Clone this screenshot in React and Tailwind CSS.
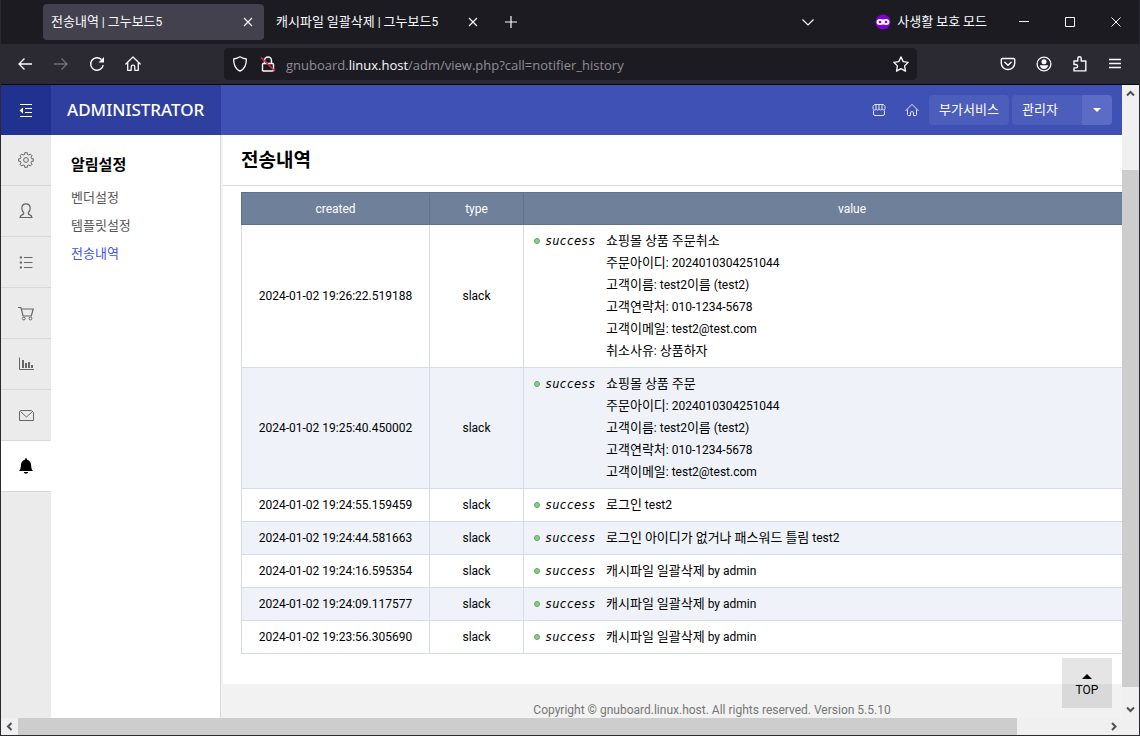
import React from "react";

const HANGUL = /([\uac00-\ud7a3]+)/;

/* Hangul glyphs run small beside the Latin face, so they are set one step larger. */
function Mixed({ children }) {
  return children.split(HANGUL).map((part, i) =>
    HANGUL.test(part) ? (
      <span key={i} className="text-[13px]">
        {part}
      </span>
    ) : (
      part
    )
  );
}

/* Outline of an eight-toothed gear centred in a 16 unit box. */
const GEAR_PATH =
  Array.from({ length: 8 }, (_, tooth) =>
    [
      [-14, 5.7],
      [-10, 7.4],
      [10, 7.4],
      [14, 5.7],
    ].map(([offset, radius]) => {
      const angle = ((tooth * 45 + offset) * Math.PI) / 180;
      return `${(8 + radius * Math.cos(angle)).toFixed(2)} ${(8 + radius * Math.sin(angle)).toFixed(2)}`;
    })
  )
    .flat()
    .map((point, i) => (i === 0 ? "M" : "L") + point)
    .join("") + "Z";

function Icon({ size = 16, label, children, className = "", ...rest }) {
  return (
    <svg
      width={size}
      height={size}
      viewBox={`0 0 ${size} ${size}`}
      fill="none"
      stroke="currentColor"
      strokeWidth="1"
      className={`shrink-0 ${className}`}
      aria-hidden="true"
      {...rest}
    >
      {children}
    </svg>
  );
}

const CloseIcon = () => (
  <Icon size={10}>
    <path d="M1 1l8 8M9 1l-8 8" strokeWidth="1.1" />
  </Icon>
);

function TabBar() {
  return (
    <div className="flex h-11 items-center bg-[#1c1b22] pr-[18px] pl-[42px] text-[12px] text-[#fbfbfe]">
      <div className="flex h-9 w-[221px] items-center justify-between rounded bg-[#42414d] pr-[11px] pl-2">
        <span className="whitespace-nowrap">
          <Mixed>전송내역 | 그누보드5</Mixed>
        </span>
        <button type="button" aria-label="탭 닫기">
          <CloseIcon />
        </button>
      </div>
      <div className="flex h-9 w-[225px] items-center justify-between rounded pr-[11px] pl-3">
        <span className="whitespace-nowrap">
          <Mixed>캐시파일 일괄삭제 | 그누보드5</Mixed>
        </span>
        <button type="button" aria-label="탭 닫기">
          <CloseIcon />
        </button>
      </div>
      <button type="button" aria-label="새 탭" className="ml-4">
        <Icon size={12}>
          <path d="M6 0v12M0 6h12" strokeWidth="1.2" />
        </Icon>
      </button>
      <div className="flex-1" />
      <button type="button" aria-label="탭 목록" className="mr-[60px]">
        <Icon size={14}>
          <path d="M1.500 4.500L7 10l5.500-5.500" strokeWidth="1.2" />
        </Icon>
      </button>
      <div className="flex items-center gap-[6px] whitespace-nowrap">
        <Icon size={16}>
          <circle cx="8" cy="8" r="7.500" fill="#8000d7" stroke="none" />
          <path
            d="M4.700 4.900C2.700 4.900 1.500 6.200 1.500 8s1.200 3.100 3.200 3.100c1.400 0 2.300-.7 3.300-.7s1.900.7 3.300.7c2 0 3.200-1.300 3.200-3.100s-1.200-3.100-3.200-3.100c-1.400 0-2.300.7-3.300.7s-1.900-.7-3.300-.7z"
            fill="#fff"
            stroke="none"
          />
          <circle cx="5" cy="8" r="1.300" fill="#8000d7" stroke="none" />
          <circle cx="11" cy="8" r="1.300" fill="#8000d7" stroke="none" />
        </Icon>
        <span>
          <Mixed>사생활 보호 모드</Mixed>
        </span>
      </div>
      <button type="button" aria-label="최소화" className="ml-8">
        <Icon size={10}>
          <path d="M0 4.500h10" />
        </Icon>
      </button>
      <button type="button" aria-label="최대화" className="ml-9">
        <Icon size={10}>
          <path d="M.5.5h9v9h-9z" />
        </Icon>
      </button>
      <button type="button" aria-label="창 닫기" className="ml-9">
        <Icon size={10}>
          <path d="M.5.5l9 9M9.500.5l-9 9" />
        </Icon>
      </button>
    </div>
  );
}

function Toolbar() {
  return (
    <div className="flex h-[41px] items-center border-b border-[#0c0c0d] bg-[#2b2a33] pr-[17px] pl-4 text-[#fbfbfe]">
      <div className="flex w-[207px] items-center gap-5">
        <button type="button" aria-label="뒤로">
          <Icon>
            <path d="M15 8H2M7.500 2.500L2 8l5.500 5.500" strokeWidth="1.300" />
          </Icon>
        </button>
        <button type="button" aria-label="앞으로" className="text-[#717078]">
          <Icon>
            <path d="M1 8h13M8.500 2.500L14 8l-5.500 5.500" strokeWidth="1.300" />
          </Icon>
        </button>
        <button type="button" aria-label="새로고침">
          <Icon>
            <path d="M14.200 9A6.300 6.300 0 1 1 12.500 3.600" strokeWidth="1.400" />
            <path d="M15 1v5.500H9.500z" fill="currentColor" stroke="none" />
          </Icon>
        </button>
        <button type="button" aria-label="홈">
          <Icon>
            <path
              d="M.8 8L8 1l7.200 7M2.700 6.500V14.300h3.500V11a1.800 1.800 0 0 1 3.600 0v3.300h3.500V6.500"
              strokeWidth="1.300"
              strokeLinejoin="round"
              strokeLinecap="round"
            />
          </Icon>
        </button>
      </div>
      <div className="flex h-8 flex-1 items-center rounded bg-[#1c1b22] px-2">
        <Icon>
          <path
            d="M8 .8c2 1.300 4 1.900 6.300 2.200C14.500 9 12.500 13 8 15.200 3.500 13 1.500 9 1.700 3 4 2.700 6 2.100 8 .8z"
            strokeWidth="1.300"
            strokeLinejoin="round"
          />
        </Icon>
        <Icon className="mr-[10px] ml-3">
          <rect x="2.500" y="7.500" width="11" height="7.500" rx="1" strokeWidth="1.400" />
          <path d="M4.500 7.500V4.500a3.500 3.500 0 0 1 7 0v3" strokeWidth="1.400" />
          <path d="M1 1.500l14 13.500" stroke="#e22850" strokeWidth="1.600" />
        </Icon>
        <div className="flex-1 pt-[3px] font-['Open_Sans','Noto_Sans',sans-serif] text-[13px] whitespace-nowrap text-[#8f8e96]">
          gnuboard.<span className="text-[#fbfbfe]">linux.host</span>
          /adm/view.php?call=notifier_history
        </div>
        <button type="button" aria-label="북마크">
          <Icon>
            <path
              d="M8 .9l2.200 4.700 5 .7-3.600 3.600.9 5.200L8 12.600l-4.500 2.500.9-5.200L.8 6.300l5-.7z"
              strokeWidth="1.300"
              strokeLinejoin="round"
            />
          </Icon>
        </button>
      </div>
      <div className="ml-[83px] flex items-center gap-5">
        <button type="button" aria-label="Pocket">
          <Icon>
            <path
              d="M2.500 2.500h11a1.200 1.200 0 0 1 1.200 1.200v3.500a6.700 6.300 0 0 1-13.400 0V3.700a1.200 1.200 0 0 1 1.200-1.200z"
              strokeWidth="1.400"
            />
            <path d="M4.800 6.300L8 9.300l3.200-3" strokeWidth="1.400" strokeLinecap="round" />
          </Icon>
        </button>
        <button type="button" aria-label="계정">
          <Icon>
            <circle cx="8" cy="8" r="6.900" strokeWidth="1.300" />
            <circle cx="8" cy="5.800" r="2.500" fill="currentColor" stroke="none" />
            <path d="M3.800 9.200h8.400c-.4 2.400-2 3.800-4.200 3.800s-3.800-1.400-4.200-3.800z" fill="currentColor" stroke="none" />
          </Icon>
        </button>
        <button type="button" aria-label="확장 기능">
          <Icon>
            <path
              d="M2 5h3.800V2.500a1.700 1.700 0 0 1 3.400 0V5h4.600v9.900H2v-3h1.900a1.700 1.700 0 0 0 0-3.400H2z"
              strokeWidth="1.400"
              strokeLinejoin="round"
            />
          </Icon>
        </button>
        <button type="button" aria-label="메뉴">
          <Icon size={14}>
            <path d="M1 2.500h12M1 6.500h12M1 10.500h12" strokeWidth="1.300" />
          </Icon>
        </button>
      </div>
    </div>
  );
}

const RAIL = [
  {
    label: "환경설정",
    icon: (
      <Icon size={16}>
        <path d={GEAR_PATH} strokeLinejoin="round" />
        <circle cx="8" cy="8" r="2.400" />
      </Icon>
    ),
  },
  {
    label: "회원관리",
    icon: (
      <Icon size={16}>
        <path d="M5.500 9.500C4.300 8.300 3.800 6.900 3.800 5c0-2.500 1.700-4.200 4.200-4.200S12.200 2.500 12.200 5c0 1.900-.5 3.300-1.700 4.500-.5.600-.3 1.500.6 1.900 1.900.8 2.700 1.400 2.900 3.100H2c.2-1.700 1-2.300 2.900-3.100.9-.4 1.100-1.300.6-1.900z" strokeWidth="1.200" />
      </Icon>
    ),
  },
  {
    label: "게시판관리",
    icon: (
      <Icon size={16}>
        <path d="M6 3.500h8.500M6 8.500h8.500M6 13.500h8.500" />
        <path d="M1.800 3.500h2.200M1.800 8.500h2.200M1.800 13.500h2.200" strokeWidth="2.200" />
      </Icon>
    ),
  },
  {
    label: "쇼핑몰관리",
    icon: (
      <Icon size={16}>
        <path d="M0 2.500h3l2 8.500h8.300l1.900-7H3.400" strokeWidth="1.200" />
        <circle cx="5.800" cy="13.500" r="1.400" />
        <circle cx="12.500" cy="13.500" r="1.400" />
      </Icon>
    ),
  },
  {
    label: "쇼핑몰현황",
    icon: (
      <Icon size={16}>
        <path d="M1.500 1.500v12H16" />
        <path d="M4 4h2v8H4zM7 7h2v5H7zM10 6h2v6h-2zM13 9h2v3h-2z" fill="currentColor" stroke="none" />
      </Icon>
    ),
  },
  {
    label: "SMS 관리",
    icon: (
      <Icon size={16}>
        <path d="M2.500 3.500h11l2 2v8H1.500v-9zM2.500 4.500L8.500 10l6-5.500" />
      </Icon>
    ),
  },
  {
    label: "알림설정",
    active: true,
    icon: (
      <Icon size={16}>
        <path
          d="M8 .3c.6 0 1 .4 1 1v.5c2.200.5 3.800 2.300 4 4.700l.4 3.500c.1 1.100.7 2 1.600 3H1c.9-1 1.500-1.900 1.600-3L3 6.500c.2-2.400 1.800-4.200 4-4.700v-.5c0-.6.4-1 1-1zM5.800 14h4.400c-.2 1-1.100 1.700-2.200 1.700S6 15 5.800 14z"
          fill="currentColor"
          stroke="none"
        />
      </Icon>
    ),
  },
];

const SUBMENU = [
  { label: "벤더설정" },
  { label: "템플릿설정" },
  { label: "전송내역", active: true },
];

const ROWS = [
  {
    created: "2024-01-02 19:26:22.519188",
    lines: [
      "쇼핑몰 상품 주문취소",
      "주문아이디: 2024010304251044",
      "고객이름: test2이름 (test2)",
      "고객연락처: 010-1234-5678",
      "고객이메일: test2@test.com",
      "취소사유: 상품하자",
    ],
  },
  {
    created: "2024-01-02 19:25:40.450002",
    lines: [
      "쇼핑몰 상품 주문",
      "주문아이디: 2024010304251044",
      "고객이름: test2이름 (test2)",
      "고객연락처: 010-1234-5678",
      "고객이메일: test2@test.com",
    ],
  },
  { created: "2024-01-02 19:24:55.159459", lines: ["로그인 test2"] },
  { created: "2024-01-02 19:24:44.581663", lines: ["로그인 아이디가 없거나 패스워드 틀림 test2"] },
  { created: "2024-01-02 19:24:16.595354", lines: ["캐시파일 일괄삭제 by admin"] },
  { created: "2024-01-02 19:24:09.117577", lines: ["캐시파일 일괄삭제 by admin"] },
  { created: "2024-01-02 19:23:56.305690", lines: ["캐시파일 일괄삭제 by admin"] },
];

function AdminHeader() {
  return (
    <header className="flex h-[50px] shrink-0 items-center bg-[#3f51b5] pr-[10px] text-white">
      <button type="button" aria-label="메뉴 접기" className="flex h-full w-[50px] items-center justify-center bg-[#20318f]">
        <Icon size={14}>
          <path d="M1 1.500h12M6 5.500h7M6 9.500h7M1 13.500h12" />
          <path d="M4 4.500v6l-3.500-3z" fill="currentColor" stroke="none" />
        </Icon>
      </button>
      <a
        href="#home"
        className="flex h-full w-[170px] items-center bg-[#2f3f9f] pl-4 font-['Noto_Sans',sans-serif] text-[17px] font-medium"
      >
        ADMINISTRATOR
      </a>
      <div className="flex-1" />
      <a href="#shop" aria-label="쇼핑몰" className="text-[#e3e7fa]">
        <Icon size={14}>
          <path d="M2.500 1.500h9l1.500 2v2a1.500 1.500 0 0 1-3 0 1.500 1.500 0 0 1-3 0 1.500 1.500 0 0 1-3 0 1.500 1.500 0 0 1-3 0v-2zM4 2v3.500M7 2v3.500M10 2v3.500M1.500 7.500v3.500a1.500 1.500 0 0 0 1.500 1.500h8a1.500 1.500 0 0 0 1.500-1.500V7.500" />
        </Icon>
      </a>
      <a href="#site" aria-label="커뮤니티" className="ml-[19px] text-[#e3e7fa]">
        <Icon size={14}>
          <path d="M.8 7.600L7 1.300l6.200 6.300M2.500 7v4.500a1 1 0 0 0 1 1h2V10a1.500 1.500 0 0 1 3 0v2.500h2a1 1 0 0 0 1-1V7" strokeLinecap="round" strokeLinejoin="round" />
        </Icon>
      </a>
      <a href="#service" className="ml-[10px] flex h-[30px] w-20 items-center justify-center rounded-sm bg-[#4c5dbb] text-[13px]">
        부가서비스
      </a>
      <button type="button" className="ml-[3px] flex h-[30px] w-[100px] items-center justify-between overflow-hidden rounded-sm bg-[#4c5dbb] pl-[10px] text-[13px]">
        관리자
        <span className="flex h-full w-[30px] items-center justify-center bg-[#5c6bc6]">
          <Icon size={8}>
            <path d="M0 2h8L4 6z" fill="currentColor" stroke="none" />
          </Icon>
        </span>
      </button>
    </header>
  );
}

function SideNav() {
  return (
    <nav className="flex shrink-0">
      <ul className="w-[50px] bg-[#ebebeb] text-[#666]">
        {RAIL.map((item) => (
          <li key={item.label}>
            <a
              href={`#${item.label}`}
              aria-label={item.label}
              className={`flex h-[51px] items-center justify-center border-b border-[#d8d8d8] ${item.active ? "bg-white text-black" : ""}`}
            >
              {item.icon}
            </a>
          </li>
        ))}
      </ul>
      <div className="w-[172px] border-r-2 border-[#f3f3f3]">
        <div className="h-full border-r border-[#d8dadd] pt-[19px] pl-5">
          <h2 className="text-[15px] leading-[22px] font-bold text-black">알림설정</h2>
          <ul className="mt-2 text-[13px] leading-7">
            {SUBMENU.map((item) => (
              <li key={item.label}>
                <a href={`#${item.label}`} className={item.active ? "text-[#3f51f5]" : "text-[#555]"}>
                  {item.label}
                </a>
              </li>
            ))}
          </ul>
        </div>
      </div>
    </nav>
  );
}

function HistoryTable() {
  return (
    <table className="w-full table-fixed border-collapse text-[12px] leading-[22px] text-black">
      <colgroup>
        <col className="w-[188px]" />
        <col className="w-[94px]" />
        <col />
      </colgroup>
      <thead>
        <tr>
          {["created", "type", "value"].map((name) => (
            <th
              key={name}
              scope="col"
              className="border border-[#60718b] bg-[#6f809a] pt-[5px] pb-1 font-normal text-white"
            >
              {name}
            </th>
          ))}
        </tr>
      </thead>
      <tbody>
        {ROWS.map((row) => (
          <tr key={row.created} className="even:bg-[#eff3f9]">
            <td className="border border-[#d6dce7] py-[5px] text-center whitespace-nowrap">{row.created}</td>
            <td className="border border-[#d6dce7] py-[5px] text-center">slack</td>
            <td className="border border-[#d6dce7] px-[10px] py-[5px]">
              <div className="flex">
                <div className="flex h-[22px] w-[72px] shrink-0 items-center gap-[5px]">
                  <span className="size-[6px] rounded-full border border-[#5fa85f] bg-[#8ccb88]" />
                  <em className="font-['DejaVu_Sans_Mono',monospace]">success</em>
                </div>
                <div>
                  {row.lines.map((line) => (
                    <p key={line} className="h-[22px] whitespace-nowrap">
                      <Mixed>{line}</Mixed>
                    </p>
                  ))}
                </div>
              </div>
            </td>
          </tr>
        ))}
      </tbody>
    </table>
  );
}

function Chevron({ d }) {
  return (
    <Icon size={17} className="text-[#505050]">
      <path d={d} strokeWidth="2" />
    </Icon>
  );
}

export default function App() {
  return (
    <div className="flex h-screen flex-col overflow-hidden border-r border-b border-l border-[#2b2a33] bg-white font-[Roboto,'Noto_Sans_CJK_KR',sans-serif]">
      <TabBar />
      <Toolbar />
      <div className="flex min-h-0 flex-1">
        <div className="relative flex min-w-0 flex-1 flex-col">
          <AdminHeader />
          <div className="flex min-h-0 flex-1 overflow-hidden">
            <SideNav />
            <main className="flex min-w-[978px] flex-1 flex-col">
              <h1 className="flex h-[51px] shrink-0 items-center border-b border-[#d9dbde] pt-[3px] pl-[18px] text-[19px] font-bold text-black">
                전송내역
              </h1>
              <div className="pt-[6px] pr-5 pb-[30px] pl-[18px]">
                <HistoryTable />
              </div>
              <footer className="flex-1 bg-[#f2f2f2] pt-[15px] text-center text-[12px] leading-[22px] text-[#777]">
                Copyright © gnuboard.linux.host. All rights reserved. Version 5.5.10
              </footer>
            </main>
          </div>
          <button
            type="button"
            className="absolute right-[10px] bottom-[10px] flex size-[50px] flex-col items-center justify-center bg-black/10 pt-1 text-[12px] leading-5 text-black"
          >
            <Icon size={10}>
              <path d="M0 9h10L5 4z" fill="currentColor" stroke="none" />
            </Icon>
            TOP
          </button>
        </div>
        <div className="flex w-[17px] shrink-0 flex-col bg-[#f0f0f0]">
          <Chevron d="M5 10.500l3.500-3.500 3.500 3.500" />
          <div className="mt-[68px] mb-[14px] flex-1 bg-[#cdcdcd]" />
          <Chevron d="M5 6.500L8.500 10 12 6.500" />
        </div>
      </div>
      <div className="flex h-[17px] shrink-0 bg-[#f0f0f0] pr-[17px]">
        <Chevron d="M10.500 5L7 8.500l3.500 3.500" />
        <div className="mr-[88px] flex-1 bg-[#cdcdcd]" />
        <Chevron d="M7 5l3.500 3.500L7 12" />
      </div>
    </div>
  );
}
